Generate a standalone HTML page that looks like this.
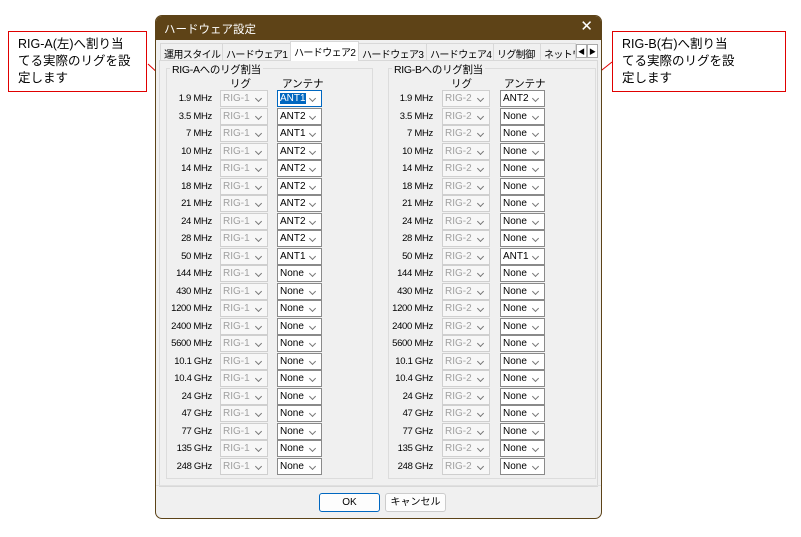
<!DOCTYPE html>
<html><head><meta charset="utf-8"><style>
*{margin:0;padding:0;box-sizing:border-box}
body{width:801px;height:537px;background:#fff;position:relative;overflow:hidden;font-family:"Liberation Sans","Noto Sans CJK JP",sans-serif;font-size:10px;color:#000}
.a{position:absolute}
.note{position:absolute;border:1px solid #e00000;background:#fff;font-size:12.5px;line-height:17px;padding:4px 0 0 9px}
.dlg{position:absolute;left:155px;top:15px;width:447px;height:504px;background:#f0f0f0;border:1px solid #5c4318;border-radius:7px;overflow:hidden}
.tb{position:absolute;left:0;top:0;width:100%;height:24px;background:#5e4317;color:#fff;font-size:11.5px;padding:5px 0 0 8px}
.grp{position:absolute;border:1px solid #dcdcdc}
.gl{position:absolute;background:#f0f0f0;font-size:10.5px;padding:0 2px;letter-spacing:-0.3px}
.lb{position:absolute;width:70px;text-align:right;font-size:9.5px;letter-spacing:-0.3px}
.cb{position:absolute;height:17px;border:1px solid #cfcfcf;background:#f7f7f7;color:#a0a0a0;font-size:10px;padding:2px 0 0 2px}
.cb.e{border-color:#8a8a8a;background:#fff;color:#000}
.cb:after{content:"";position:absolute;right:6px;top:5px;width:4px;height:4px;border-right:1px solid #777;border-bottom:1px solid #777;transform:rotate(45deg)}
.tab{position:absolute;top:27px;height:17px;font-size:10px;letter-spacing:-0.6px;padding:2px 0 0 3px;border:1px solid #d8d8d8;border-bottom:none;background:#f0f0f0;overflow:hidden;white-space:nowrap}
.btn{position:absolute;top:477px;height:19px;border:1px solid #ccc;background:#fdfdfd;border-radius:3px;font-size:10px;text-align:center;line-height:17px;white-space:nowrap;overflow:hidden}
</style></head><body>
<div class="note" style="left:8px;top:31px;width:139px;height:61px">RIG-A(左)へ割り当<br>てる実際のリグを設<br>定します</div>
<div class="note" style="left:612px;top:31px;width:174px;height:61px">RIG-B(右)へ割り当<br>てる実際のリグを設<br>定します</div>
<svg class="a" style="left:0;top:0" width="801" height="537"><line x1="148" y1="64" x2="172" y2="86" stroke="#e00000"/><line x1="612" y1="62" x2="578" y2="89" stroke="#e00000"/></svg>
<div class="dlg">
<div class="tb">ハードウェア設定<span style="position:absolute;right:8px;top:1px;font-size:15px">✕</span></div>
<div class="tab" style="left:4px;width:63px">運用スタイル</div>
<div class="tab" style="left:66px;width:69px">ハードウェア1</div>
<div class="tab" style="left:134px;width:69px;top:25px;height:20px;background:#fff;z-index:2">ハードウェア2</div>
<div class="tab" style="left:202px;width:69px">ハードウェア3</div>
<div class="tab" style="left:270px;width:68px">ハードウェア4</div>
<div class="tab" style="left:337px;width:48px">リグ制御</div>
<div class="tab" style="left:384px;width:36px">ネットワ</div>
<div class="a" style="left:420px;top:28px;width:11px;height:14px;border:1px solid #aaa;background:#fff;font-size:7px;text-align:center;padding-top:2px">◀</div>
<div class="a" style="left:431px;top:28px;width:11px;height:14px;border:1px solid #aaa;background:#fff;font-size:7px;text-align:center;padding-top:2px">▶</div>
<div class="a" style="left:3px;top:44px;width:439px;height:427px;border:1px solid #d8d8d8;background:#f0f0f0"></div>
<div class="grp" style="left:10px;top:52px;width:207px;height:411px"></div>
<div class="gl" style="left:14px;top:46px">RIG-Aへのリグ割当</div>
<div class="grp" style="left:232px;top:52px;width:208px;height:411px"></div>
<div class="gl" style="left:236px;top:46px">RIG-Bへのリグ割当</div>
<div class="a" style="left:74px;top:60px;font-size:10.5px">リグ</div>
<div class="a" style="left:126px;top:60px;font-size:10.5px">アンテナ</div>
<div class="a" style="left:295px;top:60px;font-size:10.5px">リグ</div>
<div class="a" style="left:348px;top:60px;font-size:10.5px">アンテナ</div>
<div id="rows"></div>
<div class="a" style="left:0;top:469px;width:100%;height:1px;background:#e0e0e0"></div>
<div class="btn" style="left:163px;width:61px;border:1px solid #0067c0">OK</div>
<div class="btn" style="left:229px;width:61px">キャンセル</div>
</div>
<script>
var f=["1.9 MHz","3.5 MHz","7 MHz","10 MHz","14 MHz","18 MHz","21 MHz","24 MHz","28 MHz","50 MHz","144 MHz","430 MHz","1200 MHz","2400 MHz","5600 MHz","10.1 GHz","10.4 GHz","24 GHz","47 GHz","77 GHz","135 GHz","248 GHz"];
var A=["ANT1","ANT2","ANT1","ANT2","ANT2","ANT2","ANT2","ANT2","ANT2","ANT1"];
var h="";
for(var i=0;i<22;i++){var t=74+i*17.5;var aa=A[i]||"None";var bb=i==0?"ANT2":(i==9?"ANT1":"None");
h+='<div class="lb" style="left:-14px;top:'+(t+3)+'px">'+f[i]+'</div>';
h+='<div class="cb" style="left:64px;top:'+t+'px;width:48px">RIG-1</div>';
h+='<div class="cb e" style="left:121px;top:'+t+'px;width:45px'+(i==0?';border-color:#0067c0':'')+'">'+(i==0?'<span style="background:#0067c0;color:#fff">ANT1</span>':aa)+'</div>';
h+='<div class="lb" style="left:207px;top:'+(t+3)+'px">'+f[i]+'</div>';
h+='<div class="cb" style="left:286px;top:'+t+'px;width:48px">RIG-2</div>';
h+='<div class="cb e" style="left:344px;top:'+t+'px;width:45px">'+bb+'</div>';}
document.getElementById("rows").innerHTML=h;
</script>
</body></html>
